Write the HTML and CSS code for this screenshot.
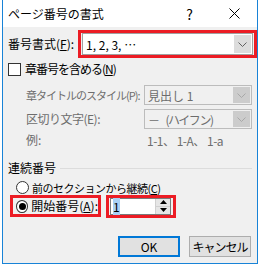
FILE: index.html
```html
<!DOCTYPE html>
<html>

<head>
  <meta charset="utf-8" />
  <link rel="stylesheet" href="styles.css">
</head>

<body>
  <div class="dialog">
    <div class="titlebar">
      <span class="title">ページ番号の書式</span>
      <span class="tb-btn">?</span>
      <span class="tb-btn">
        <svg width="11" height="11" viewBox="0 0 11 11"><path d="M0.5 0.5 L10.5 10.5 M10.5 0.5 L0.5 10.5" stroke="#000" stroke-width="1" /></svg>
      </span>
    </div>

    <div class="content">
      <div class="row format-row">
        <span class="label">番号書式(<u>F</u>):</span>
        <div class="mark format-mark">
          <div class="select">
            <span class="value">1, 2, 3, …</span>
            <span class="drop">
              <svg width="9" height="5" viewBox="0 0 9 5"><path d="M0.5 0.5 L4.5 4.5 L8.5 0.5" stroke="#606060" fill="none" /></svg>
            </span>
          </div>
        </div>
      </div>

      <div class="row check-row">
        <span class="checkbox"></span>
        <span class="label tight-s">章番号を含める(<u>N</u>)</span>
      </div>

      <div class="row sub-row style-row">
        <span class="label muted small">章タイトルのスタイル(P):</span>
        <div class="select disabled">
          <span class="value">見出し 1</span>
          <span class="drop">
            <svg width="9" height="5" viewBox="0 0 9 5"><path d="M0.5 0.5 L4.5 4.5 L8.5 0.5" stroke="#a8a8a8" fill="none" /></svg>
          </span>
        </div>
      </div>

      <div class="row sub-row sep-row">
        <span class="label muted tight-xs">区切り文字(E):</span>
        <div class="select disabled">
          <span class="value">－&nbsp;&nbsp;<span class="tight">(ハイフン)</span></span>
          <span class="drop">
            <svg width="9" height="5" viewBox="0 0 9 5"><path d="M0.5 0.5 L4.5 4.5 L8.5 0.5" stroke="#a8a8a8" fill="none" /></svg>
          </span>
        </div>
      </div>

      <div class="row sub-row example-row">
        <span class="label muted">例:</span>
        <span class="example muted tight-xs">1-1、 1-A、 1-a</span>
      </div>

      <div class="row group-row">
        <span class="label">連続番号</span>
        <span class="group-line"></span>
      </div>

      <div class="row radio-row">
        <span class="radio"></span>
        <span class="label small-s">前のセクションから継続(<u>C</u>)</span>
      </div>

      <div class="row start-row">
        <div class="mark radio-mark">
          <span class="radio checked"></span>
          <span class="label">開始番号(<u>A</u>):</span>
        </div>
        <div class="mark spin-mark">
          <div class="spinner">
            <span class="spin-value"><span class="selected">1</span></span>
            <span class="spin-btns">
              <span class="spin-btn"><svg width="7" height="4" viewBox="0 0 7 4"><path d="M3.5 0 L7 4 L0 4 Z" fill="#000" /></svg></span>
              <span class="spin-btn"><svg width="7" height="4" viewBox="0 0 7 4"><path d="M0 0 L7 0 L3.5 4 Z" fill="#000" /></svg></span>
            </span>
          </div>
        </div>
      </div>

      <div class="row button-row">
        <button class="btn default">OK</button>
        <button class="btn tight-s">キャンセル</button>
      </div>
    </div>
  </div>
</body>

</html>
```

FILE: styles.css
```css
/* whole window */
body {
  margin: 0;
  background: #ffffff;
  font-family: "Noto Sans CJK JP", "Noto Sans", sans-serif;
  font-size: 12px;
  color: #000000;
}

u {
  text-decoration: underline;
  text-underline-offset: 1px;
}

/* the UI font of the original is narrower in kana */
.small {
  font-size: 11px;
  letter-spacing: -1px;
}

.small-s {
  font-size: 11px;
  letter-spacing: -0.5px;
}

.tight {
  letter-spacing: -1.5px;
}

.tight-s {
  letter-spacing: -1px;
}

.tight-xs {
  letter-spacing: -0.5px;
}

.dialog {
  margin-left: 2px;
  width: 254px;
  height: 263px;
  border: 1px solid #1883d7;
  border-top: none;
  background: #f0f0f0;
  display: flex;
  flex-direction: column;
}

.titlebar {
  height: 27px;
  background: #ffffff;
  display: flex;
  align-items: center;
}

.title {
  flex: 1;
  padding-left: 5px;
}

.tb-btn {
  width: 45px;
  height: 27px;
  display: flex;
  align-items: center;
  justify-content: center;
  font-size: 14px;
}

.content {
  flex: 1;
  padding: 0 0 0 5px;
}

.row {
  display: flex;
  align-items: center;
}

.label {
  white-space: nowrap;
  line-height: 14px;
}

.muted {
  color: #6d6d6d;
}

/* red highlight boxes */
.mark {
  border: 3px solid #ec1c24;
  display: flex;
  align-items: center;
}

.format-row {
  margin-top: 3px;
  height: 28px;
}

.format-mark {
  margin-left: 4px;
  width: 179px;
  height: 28px;
  box-sizing: border-box;
  padding-left: 1px;
}

.select {
  height: 18px;
  border: 1px solid #adadad;
  background: #f0f0f0;
  display: flex;
  align-items: center;
  box-sizing: content-box;
}

.format-mark .select {
  width: 169px;
  height: 20px;
  background: #ffffff;
  border-color: #a0a0a0;
}

.select .value {
  flex: 1;
  padding-left: 3px;
  white-space: nowrap;
}

.select .drop {
  width: 17px;
  align-self: stretch;
  margin: 1px;
  background: #dcdcdc;
  display: flex;
  align-items: center;
  justify-content: center;
}

.select.disabled {
  width: 106px;
  color: #6d6d6d;
  background: #f0f0f0;
  border-color: #bcbcbc;
}

.select.disabled .drop {
  background: #cccccc;
}

.check-row {
  margin-top: 4px;
  height: 14px;
}

.checkbox {
  width: 11px;
  height: 11px;
  border: 1px solid #333333;
  background: #ffffff;
  margin-left: 0;
  margin-right: 4px;
}

.sub-row {
  padding-left: 18px;
}

.sub-row .label {
  width: 118px;
}

.style-row {
  margin-top: 10px;
  height: 18px;
}

.sep-row {
  margin-top: 6px;
  height: 18px;
}

.example-row {
  margin-top: 5px;
  height: 14px;
}

.example {
  white-space: nowrap;
  padding-left: 3px;
}

.group-row {
  margin-top: 13px;
  height: 15px;
}

.group-line {
  flex: 1;
  height: 1px;
  background: #dcdcdc;
  margin: 1px 5px 0 4px;
}

.radio {
  width: 11px;
  height: 11px;
  border: 1px solid #333333;
  border-radius: 50%;
  background: #ffffff;
  margin-right: 3px;
  display: flex;
  align-items: center;
  justify-content: center;
}

.radio.checked::after {
  content: "";
  width: 7px;
  height: 7px;
  border-radius: 50%;
  background: #000000;
}

.radio-row {
  margin-top: 6px;
  height: 13px;
  padding-left: 8px;
}

.start-row {
  margin-top: 1px;
  height: 22px;
  padding-left: 2px;
}

.radio-mark {
  width: 91px;
  height: 22px;
  box-sizing: border-box;
  padding-left: 3px;
}

.spin-mark {
  margin-left: 5px;
  width: 70px;
  height: 23px;
  box-sizing: border-box;
  padding-left: 1px;
}

.spinner {
  width: 59px;
  height: 15px;
  border: 1px solid #7a7a7a;
  background: #ffffff;
  display: flex;
}

.spin-value {
  flex: 1;
  padding-left: 2px;
  line-height: 15px;
}

.selected {
  background: #a9d0f5;
}

.spin-btns {
  width: 14px;
  display: flex;
  flex-direction: column;
  border-left: 1px solid #d0d0d0;
}

.spin-btn {
  flex: 1;
  display: flex;
  align-items: center;
  justify-content: center;
  background: #e6e6e6;
}

.spin-btn + .spin-btn {
  border-top: 1px solid #d0d0d0;
}

.button-row {
  margin-top: 19px;
  justify-content: flex-end;
  gap: 9px;
  padding-right: 6px;
}

.btn {
  font-family: inherit;
  font-size: 12px;
  width: 62px;
  height: 21px;
  padding: 0;
  background: #e1e1e1;
  border: 1px solid #adadad;
  color: #000000;
}

.btn.default {
  border: 2px solid #0078d7;
}
```
